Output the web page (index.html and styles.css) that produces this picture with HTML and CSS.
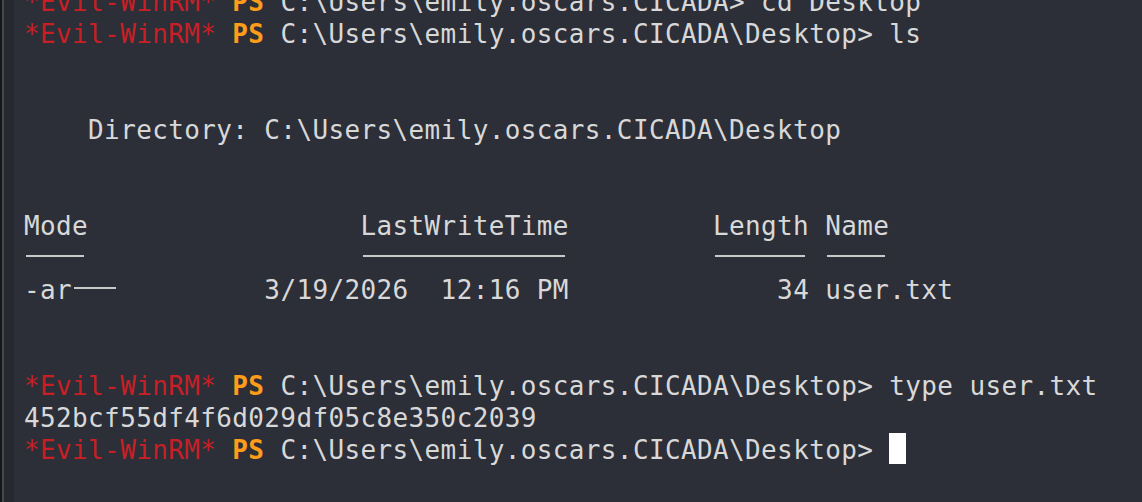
FILE: index.html
```html
<!DOCTYPE html>
<html lang="en">
<head>
<meta charset="utf-8">
<title>Evil-WinRM</title>
<link rel="stylesheet" href="styles.css">
</head>
<body>
<div class="edge"></div>
<pre class="term"><span class="red">*Evil-WinRM*</span> <span class="ps">PS</span> C:\Users\emily.oscars.CICADA&gt; cd Desktop
<span class="red">*Evil-WinRM*</span> <span class="ps">PS</span> C:\Users\emily.oscars.CICADA\Desktop&gt; ls


    Directory: C:\Users\emily.oscars.CICADA\Desktop


Mode                 LastWriteTime         Length Name
<span class="lig">----</span>                 <span class="lig">-------------</span>         <span class="lig">------</span> <span class="lig">----</span>
-ar<span class="lig">---</span>         3/19/2026  12:16 PM             34 user.txt


<span class="red">*Evil-WinRM*</span> <span class="ps">PS</span> C:\Users\emily.oscars.CICADA\Desktop&gt; type user.txt
452bcf55df4f6d029df05c8e350c2039
<span class="red">*Evil-WinRM*</span> <span class="ps">PS</span> C:\Users\emily.oscars.CICADA\Desktop&gt; <span class="cursor"></span></pre>
</body>
</html>
```

FILE: styles.css
```css
html, body {
  margin: 0;
  padding: 0;
}

body {
  width: 1142px;
  height: 502px;
  overflow: hidden;
  background: #2c2f38;
  display: flex;
  align-items: flex-start;
}

.edge {
  flex: none;
  width: 14px;
  align-self: stretch;
  background: linear-gradient(to right, #16171a 0 2px, #45484e 2px 4px, #262930 4px 14px);
}

.term {
  margin: -14px 0 0 10px;
  font-family: "DejaVu Sans Mono", "Liberation Mono", monospace;
  font-size: 26px;
  line-height: 32px;
  letter-spacing: 0.37px;
  color: #d8d8d8;
  white-space: pre;
}

.red {
  color: #c71f25;
}

.ps {
  color: #ff9c1a;
  font-weight: bold;
}

.lig {
  color: transparent;
  background-image: linear-gradient(#c9c9c9, #c9c9c9);
  background-repeat: no-repeat;
  background-size: calc(100% - 6px) 2px;
  background-position: 2px 44%;
}

.cursor {
  display: inline-block;
  width: 17px;
  height: 31px;
  background: #ffffff;
  vertical-align: top;
  margin-top: -1px;
}
```
